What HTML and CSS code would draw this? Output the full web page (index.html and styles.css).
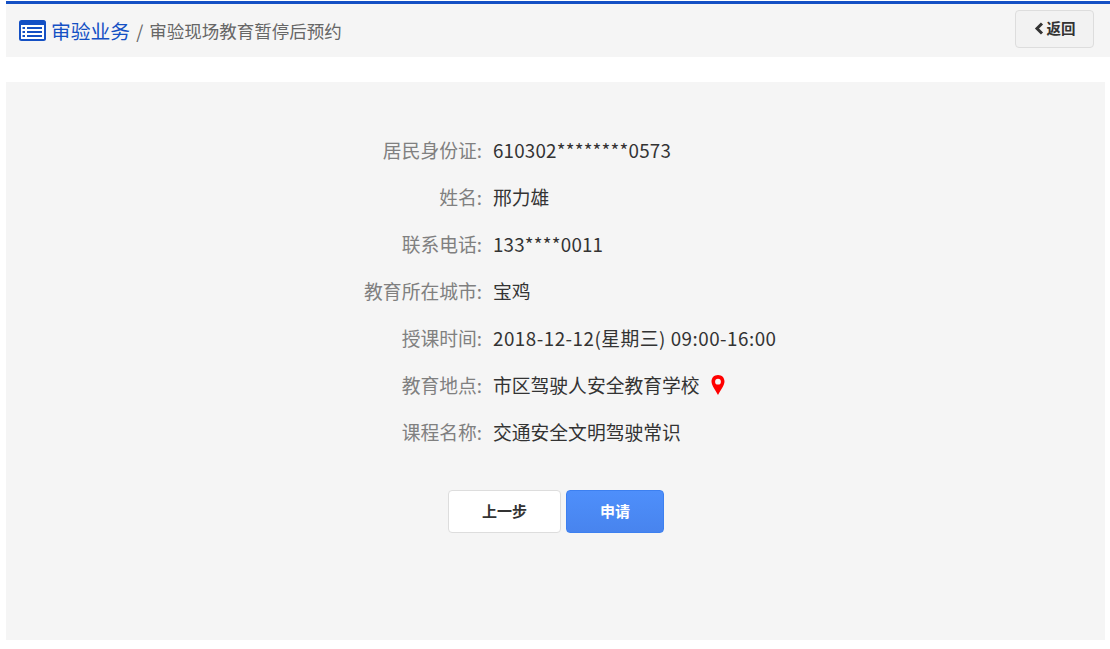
FILE: index.html
```html
<!DOCTYPE html>
<html lang="zh-CN">
<head>
<meta charset="utf-8">
<title>审验现场教育暂停后预约</title>
<link rel="stylesheet" href="styles.css">
</head>
<body>
<div class="page">
  <header class="head">
    <div class="crumbs">
      <svg class="list-icon" width="27" height="21" viewBox="0 0 27 21"><rect x="0" y="0" width="27" height="21" rx="2.500" fill="#1450c4"/><rect x="2" y="5" width="23" height="14" fill="#fff"/><rect x="3.500" y="7" width="2.500" height="2" fill="#1450c4"/><rect x="3.500" y="11" width="2.500" height="2" fill="#1450c4"/><rect x="3.500" y="15" width="2.500" height="2" fill="#1450c4"/><rect x="8" y="7" width="15" height="2" fill="#1450c4"/><rect x="8" y="11" width="15" height="2" fill="#1450c4"/><rect x="8" y="15" width="15" height="2" fill="#1450c4"/></svg>
      <span class="crumb-main">审验业务</span>
      <span class="crumb-sep">/</span>
      <span class="crumb-rest">审验现场教育暂停后预约</span>
    </div>
    <button class="back"><svg width="10" height="13" viewBox="0 0 10 13"><path d="M8 1.500 3 6.500 8 11.500" fill="none" stroke="#333" stroke-width="3"/></svg><span class="back-label">返回</span></button>
  </header>
  <main class="panel">
    <dl class="info">
      <div class="row"><dt>居民身份证:</dt><dd><span class="num">610302********0573</span></dd></div>
      <div class="row"><dt>姓名:</dt><dd>邢力雄</dd></div>
      <div class="row"><dt>联系电话:</dt><dd><span class="num">133****0011</span></dd></div>
      <div class="row"><dt>教育所在城市:</dt><dd>宝鸡</dd></div>
      <div class="row"><dt>授课时间:</dt><dd><span class="date">2018-12-12(星期三) 09:00-16:00</span></dd></div>
      <div class="row"><dt>教育地点:</dt><dd>市区驾驶人安全教育学校<svg class="pin" width="14" height="20" viewBox="0 0 14 20"><path fill-rule="evenodd" d="M7 0C3.100 0 .5 2.800.5 6.500.5 10.500 5 16 7 20c2-4 6.500-9.500 6.500-13.500C13.500 2.800 10.900 0 7 0Zm0 3.800a2.900 2.900 0 1 1 0 5.800 2.900 2.900 0 0 1 0-5.800Z" fill="#f00"/></svg></dd></div>
      <div class="row"><dt>课程名称:</dt><dd>交通安全文明驾驶常识</dd></div>
    </dl>
    <div class="actions">
      <button class="btn prev"><span class="btn-label">上一步</span></button>
      <button class="btn apply"><span class="btn-label">申请</span></button>
    </div>
  </main>
</div>
</body>
</html>
```
FILE: styles.css
```css
* { box-sizing: border-box; }
html, body { margin: 0; padding: 0; background: #fff; }
body { font-family: "Noto Sans CJK SC", "Open Sans", sans-serif; color: #333; height: 649px; overflow: hidden; }
.page { padding: 1px 0 0 6px; }
.head { height: 56px; background: #f5f5f5; border-top: 3px solid #1450c4; display: flex; align-items: center; justify-content: space-between; padding: 0 16px 0 13px; }
.crumbs { display: flex; align-items: center; line-height: 28px; }
.list-icon { margin-right: 5px; }
.crumb-main { font-size: 19.800px; color: #1450c4; }
.crumb-sep { font-size: 18px; color: #666; margin: 0 6px 0 6px; }
.crumb-rest { font-size: 17.500px; color: #666; }
.back { width: 79px; height: 38px; background: #f2f2f2; border: 1px solid #ddd; border-radius: 4px; font: bold 14.500px/20px "Noto Sans CJK SC", "Open Sans", sans-serif; color: #333; display: flex; align-items: center; justify-content: center; gap: 3px; padding: 0 0 2px; margin-top: -3px; }
.panel { margin-top: 25px; height: 558px; background: #f5f5f5; padding-top: 44px; margin-right: 5px; }
.info { margin: 0; }
.row { display: flex; height: 47px; align-items: center; font-size: 18.800px; line-height: 24px; }
.row dt { width: 476px; text-align: right; color: #808080; }
.row dd { margin: 0 0 0 11px; color: #333; display: flex; align-items: center; }
.num { letter-spacing: .2px; }
.date { letter-spacing: .5px; }
.pin { margin-left: 11px; }
.actions { display: flex; gap: 5px; margin-left: 442px; margin-top: 35px; }
.btn { height: 43px; border-radius: 4px; font: bold 15px/20px "Noto Sans CJK SC", "Open Sans", sans-serif; padding: 0 0 2px; }
.prev { width: 113px; background: #fff; border: 1px solid #ddd; color: #333; }
.apply { width: 98px; background: linear-gradient(#4e8ffb, #4884ee); border: 1px solid #3d80f0; color: #fff; }
```
